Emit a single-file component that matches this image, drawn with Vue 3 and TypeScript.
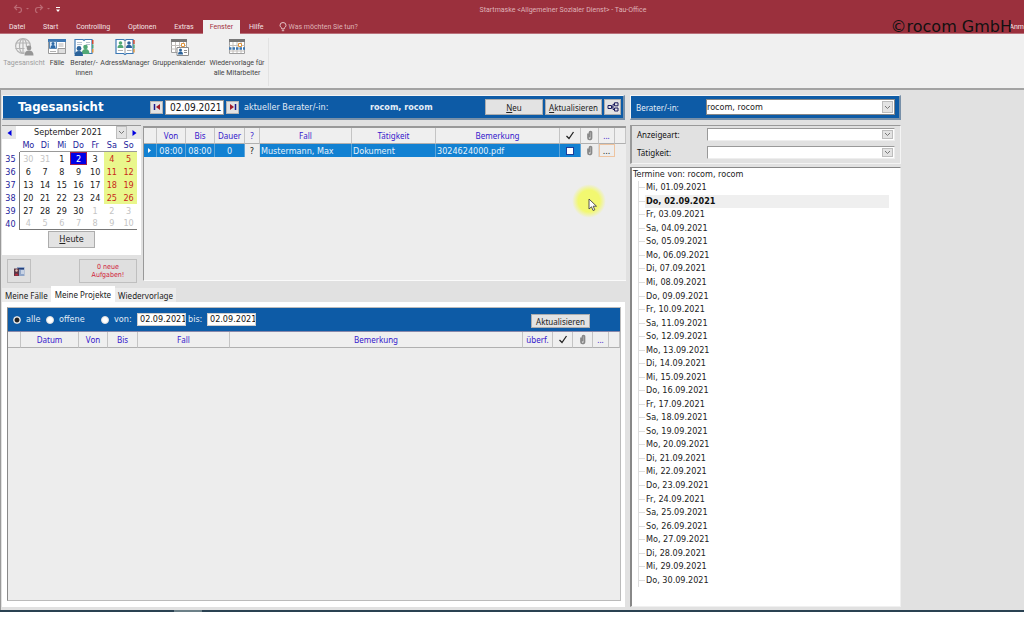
<script setup lang="ts">
import { ref } from 'vue'

interface MenuTab { label: string; active?: boolean }
interface Day { n: number; off?: boolean; today?: boolean; weekend?: boolean }
interface Week { kw: number; days: Day[] }

const menuTabs: MenuTab[] = [
  { label: 'Datei' },
  { label: 'Start' },
  { label: 'Controlling' },
  { label: 'Optionen' },
  { label: 'Extras' },
  { label: 'Fenster', active: true },
  { label: 'Hilfe' },
]

const weekdayNames = ['Mo', 'Di', 'Mi', 'Do', 'Fr', 'Sa', 'So']

function buildWeeks(): Week[] {
  const weeks: Week[] = []
  for (let w = 0; w < 6; w++) {
    const days: Day[] = []
    for (let d = 0; d < 7; d++) {
      const date = new Date(2021, 7, 30 + w * 7 + d)
      const off = date.getMonth() !== 8
      days.push({
        n: date.getDate(),
        off,
        today: !off && date.getDate() === 2,
        weekend: !off && d > 4,
      })
    }
    weeks.push({ kw: 35 + w, days })
  }
  return weeks
}
const weeks = buildWeeks()

const shortDays = ['So', 'Mo', 'Di', 'Mi', 'Do', 'Fr', 'Sa']
const termine = Array.from({ length: 30 }, (_, i) => {
  const date = new Date(2021, 8, i + 1)
  return `${shortDays[date.getDay()]}, ${String(i + 1).padStart(2, '0')}.09.2021`
})

const month = ref('September 2021')
const day = ref('02.09.2021')
const from = ref('02.09.2021')
const to = ref('02.09.2021')
const range = ref('alle')
const berater = ref('rocom, rocom')
const done = ref(false)
</script>

<template>
  <div class="app">
    <header class="top">
      <div class="titlebar">
        <div class="quick">
          <button class="bare" aria-label="Rückgängig">
            <svg width="20" height="10" viewBox="0 0 20 10"><path d="M4 1 L1.500 3.500 L4 6 M1.500 3.500 H6 Q8.500 3.500 8.500 6 Q8.500 8.500 5.500 8.500" fill="none" stroke="#bb6a74" stroke-width="1.200" /><path d="M13 4 h3 l-1.500 1.500z" fill="#bb6a74" /></svg>
          </button>
          <button class="bare" aria-label="Wiederholen">
            <svg width="20" height="10" viewBox="0 0 20 10"><path d="M6 1 L8.500 3.500 L6 6 M8.500 3.500 H4 Q1.500 3.500 1.500 6 Q1.500 8.500 3.500 8.500" fill="none" stroke="#bb6a74" stroke-width="1.200" /><path d="M13 4 h3 l-1.500 1.500z" fill="#bb6a74" /></svg>
          </button>
          <button class="bare narrow" aria-label="Schnellzugriff anpassen">
            <svg width="6" height="8" viewBox="0 0 6 8"><path d="M1 2.500 h4" stroke="#fff" /><path d="M1 4.500 h4 l-2 2.500z" fill="#fff" /></svg>
          </button>
        </div>
        <h1 class="wintitle">Startmaske &lt;Allgemeiner Sozialer Dienst&gt; - Tau-Office</h1>
      </div>
      <nav class="menu">
        <button v-for="t in menuTabs" :key="t.label" class="menutab" :class="{ active: t.active }">{{ t.label }}</button>
        <button class="tell">
          <svg width="8" height="10" viewBox="0 0 8 10"><path d="M2.800 7 V6 Q1 5 1 3.300 A3 2.800 0 0 1 7 3.300 Q7 5 5.200 6 V7 Z M2.800 8.700 h2.400" fill="none" stroke="#ecd2d5" stroke-width=".9" /></svg>
          Was möchten Sie tun?
        </button>
        <button class="login">Anm</button>
      </nav>
      <div class="watermark">©rocom GmbH</div>
    </header>

    <section class="ribbon" aria-label="Fenster">
      <div class="group">
        <button class="tool w1" disabled>
          <svg width="20" height="18" viewBox="0 0 20 18"><g fill="none" stroke="#b4b4b4" stroke-width="1.200"><circle cx="9" cy="8" r="7.400" /><ellipse cx="9" cy="8" rx="3.500" ry="7.400" /><path d="M2 5 H16 M1.500 10.500 H14 M9 .6 V15" /></g><path d="M10.500 9 h8 v9 h-8z" fill="#f0f0f0" /><circle cx="15" cy="10" r="2.400" fill="#969696" /><path d="M10.500 17.500 Q10.500 12.500 15 12.500 Q19.500 12.500 19.500 17.500z" fill="#969696" /></svg>
          <span>Tagesansicht</span>
        </button>
        <button class="tool w2">
          <svg width="18" height="18" viewBox="0 0 18 18"><path d="M.5 1.500 h17 v14 h-17z" fill="#fff" stroke="#9a9a9a" /><path d="M0 1 h18 v3 h-18z" fill="#3c78b4" /><path d="M1.500 3.500 h7 v7 h-7z" fill="#dbe8f4" stroke="#5a88b4" /><circle cx="5" cy="5.500" r="1.500" fill="#2c6aa8" /><path d="M2.500 10 Q2.500 7 5 7 Q7.500 7 7.500 10z" fill="#2c6aa8" /><path d="M10.500 6 h5 M10.500 8 h5 M2 13.500 h6" stroke="#b0b0b0" /><path d="M10 10.500 h7.500 v5 h-7.500z" fill="#dedede" stroke="#9a9a9a" /></svg>
          <span>Fälle</span>
        </button>
        <button class="tool w3">
          <svg width="20" height="18" viewBox="0 0 20 18"><path d="M1 1.500 h8 l1 1 l1-1 h7 v14 h-17z" fill="#fff" stroke="#3c78b4" stroke-width="1.200" /><path d="M3 4.500 h5 M3 6.500 h5 M12 4.500 h4 M12 6.500 h4" stroke="#b8c4d0" /><path d="M18 2 h1.500 v4 h-1.500z" fill="#d14b33" /><path d="M18 6.500 h1.500 v4 h-1.500z" fill="#52a875" /><path d="M18 11 h1.500 v3.500 h-1.500z" fill="#e0953d" /><circle cx="11.500" cy="9" r="2.300" fill="#52a875" /><path d="M7.500 16 Q8 11 11.500 11 Q15.500 11 15.500 16z" fill="#52a875" /><circle cx="5" cy="10.500" r="2.400" fill="#2b6299" /><path d="M.5 18 Q.5 13 5 13 Q9 13 9 18z" fill="#2b6299" /></svg>
          <span>Berater/-<br />innen</span>
        </button>
        <button class="tool w4">
          <svg width="20" height="18" viewBox="0 0 20 18"><path d="M1 1.500 h7.500 l1.500 1 l1.500-1 h6.500 v14 h-6.500 l-1.500 1 l-1.500-1 h-7.500z" fill="#fff" stroke="#3c78b4" stroke-width="1.200" /><path d="M10 2.500 V15" stroke="#999" /><path d="M18.200 2 h1.500 v4 h-1.500z" fill="#d14b33" /><path d="M18.200 6.500 h1.500 v4 h-1.500z" fill="#52a875" /><path d="M18.200 11 h1.500 v3.500 h-1.500z" fill="#e0953d" /><circle cx="5.500" cy="5" r="1.800" fill="#52a875" /><path d="M2.500 10 Q2.500 6.800 5.500 6.800 Q8.500 6.800 8.500 10z" fill="#52a875" /><circle cx="14" cy="5" r="1.800" fill="#2b6299" /><path d="M11 10 Q11 6.800 14 6.800 Q17 6.800 17 10z" fill="#2b6299" /><path d="M3 12.500 h5 M12 12.500 h4.500" stroke="#b0b0b0" /></svg>
          <span>AdressManager</span>
        </button>
        <button class="tool w5">
          <svg width="20" height="18" viewBox="0 0 20 18"><path d="M2.500 1.500 h15 v13 h-15z" fill="#fff" stroke="#a0a0a0" /><path d="M2 1 h16 v3 h-16z" fill="#777" /><path d="M2.500 7.500 h15 M2.500 11 h15 M6.500 4 v10 M10.500 4 v10 M14.500 4 v10" stroke="#c4c0bc" /><path d="M12.500 5.500 h3 v3 h-3z" fill="#fff" stroke="#e0953d" /><path d="M8 9.500 h11.500 v8 h-11.500z" fill="#fff" stroke="#8c8c8c" /><circle cx="11.500" cy="12" r="1.500" fill="#2b6299" /><path d="M9 16.500 Q9 13.500 11.500 13.500 Q14 13.500 14 16.500z" fill="#2b6299" /><path d="M15 12.500 h3 M15 14.500 h3" stroke="#8c8c8c" /></svg>
          <span>Gruppenkalender</span>
        </button>
        <button class="tool w5">
          <svg width="18" height="18" viewBox="0 0 18 18"><path d="M1.500 1.500 h15 v14 h-15z" fill="#fff" stroke="#a0a0a0" /><path d="M1 1 h16 v3 h-16z" fill="#777" /><path d="M1.500 7.500 h15 M1.500 13 h15 M5 4 v11 M9 4 v11 M13 4 v11" stroke="#c4c0bc" /><path d="M10.500 5.500 h3 v3 h-3z" fill="#fff" stroke="#e0953d" /><path d="M1 10.500 h16" stroke="#3c78b4" stroke-width="2.500" stroke-dasharray="2.500 1" /></svg>
          <span>Wiedervorlage für<br />alle Mitarbeiter</span>
        </button>
      </div>
    </section>

    <main class="main">
      <div class="left">
        <section class="bluebar daybar">
          <h2>Tagesansicht</h2>
          <button class="step" aria-label="Vorheriger Tag"><svg width="8" height="8" viewBox="0 0 8 8"><path d="M1.500 1 v6" stroke="#1a1a8c" stroke-width="1.500" /><path d="M7 1 v6 l-4-3z" fill="#a01c2c" /></svg></button>
          <input v-model="day" class="date" aria-label="Datum" />
          <button class="step" aria-label="Nächster Tag"><svg width="8" height="8" viewBox="0 0 8 8"><path d="M6.500 1 v6" stroke="#1a1a8c" stroke-width="1.500" /><path d="M1 1 v6 l4-3z" fill="#a01c2c" /></svg></button>
          <span class="who">aktueller Berater/-in:</span>
          <b class="name">rocom, rocom</b>
          <button class="btn neu"><u>N</u>eu</button>
          <button class="btn akt"><u>A</u>ktualisieren</button>
          <button class="btn tree" aria-label="Struktur"><svg width="12" height="10" viewBox="0 0 12 10"><path d="M1 3.500 h3.500 v3 h-3.500z M7.500 .8 h3.500 v3 h-3.500z M7.500 6 h3.500 v3 h-3.500z M4.500 5 h1.500 M7.500 2.300 h-1.500 v5.200 h1.500" fill="none" stroke="#1b1b5e" /></svg></button>
        </section>

        <div class="dayrow">
          <aside class="side">
            <div class="calendar">
              <div class="calnav">
                <button aria-label="Vorheriger Monat"><svg width="5" height="6" viewBox="0 0 5 6"><path d="M4.500 0 v6 l-4-3z" fill="#0000e0" /></svg></button>
                <div class="combo month">
                  <select v-model="month" aria-label="Monat"><option>September 2021</option></select>
                  <i><svg width="7" height="5" viewBox="0 0 7 5"><path d="M1 1 l2.500 2.500 L6 1" fill="none" stroke="#777" /></svg></i>
                </div>
                <button aria-label="Nächster Monat"><svg width="5" height="6" viewBox="0 0 5 6"><path d="M.5 0 v6 l4-3z" fill="#0000e0" /></svg></button>
              </div>
              <table class="cal">
                <thead><tr><td></td><th v-for="w in weekdayNames" :key="w">{{ w }}</th></tr></thead>
                <tbody>
                  <tr v-for="w in weeks" :key="w.kw">
                    <th>{{ w.kw }}</th>
                    <td v-for="(d, i) in w.days" :key="i" :class="{ off: d.off, today: d.today, weekend: d.weekend }">{{ d.n }}</td>
                  </tr>
                </tbody>
              </table>
              <button class="btn heute"><u>H</u>eute</button>
            </div>
            <div class="sidebtns">
              <button class="flat pic" aria-label="Personenliste"><svg width="12" height="11" viewBox="0 0 12 11"><path d="M4 1 h7.500 v9 h-7.500z" fill="#8fa5c8" /><path d="M5 2 h6 v1.500 h-6z" fill="#24407c" /><path d="M8 5 h3 M8 7 h3" stroke="#fff" /><path d="M1 2.500 h5 v7.500 h-5z" fill="#5a3848" /><circle cx="3.500" cy="4.500" r="1.200" fill="#e8c0b0" /><path d="M1.500 9.500 q2-4 4 0z" fill="#c2283c" /></svg></button>
              <button class="flat tasks">0 neue<br />Aufgaben!</button>
            </div>
          </aside>

          <div class="gridbox">
            <table class="grid">
              <colgroup><col class="k13" /><col class="k29" /><col class="k29" /><col class="k30" /><col class="k15" /><col class="k92" /><col class="k84" /><col /><col class="k21" /><col class="k18" /><col class="k16" /><col class="k11" /></colgroup>
              <thead>
                <tr>
                  <th></th><th>Von</th><th>Bis</th><th>Dauer</th><th>?</th><th>Fall</th><th>Tätigkeit</th><th>Bemerkung</th>
                  <th><svg width="10" height="9" viewBox="0 0 10 9"><path d="M1.500 5 L4 7.500 L8.500 1" fill="none" stroke="#222" stroke-width="1.300" /></svg></th>
                  <th><svg width="8" height="11" viewBox="0 0 8 11"><path d="M2 3.500 V8 Q2 9.500 3.500 9.500 Q5.500 9.500 5.500 8 V2.500 Q5.500 1.500 4.500 1.500 Q3.500 1.500 3.500 2.500 V7.500" fill="none" stroke="#888" stroke-width="1.700" /></svg></th>
                  <th>...</th><th></th>
                </tr>
              </thead>
              <tbody>
                <tr class="sel">
                  <td class="c"><svg width="4" height="5" viewBox="0 0 4 5"><path d="M0 0 v5 l3-2.500z" fill="#fff" /></svg></td>
                  <td class="c">08:00</td><td class="c">08:00</td><td class="c">0</td><td class="c plain">?</td>
                  <td>Mustermann, Max</td><td>Dokument</td><td>3024624000.pdf</td>
                  <td class="c"><input v-model="done" type="checkbox" class="tick" aria-label="Erledigt" /></td>
                  <td class="c plain"><svg width="8" height="11" viewBox="0 0 8 11"><path d="M2 3.500 V8 Q2 9.500 3.500 9.500 Q5.500 9.500 5.500 8 V2.500 Q5.500 1.500 4.500 1.500 Q3.500 1.500 3.500 2.500 V7.500" fill="none" stroke="#888" stroke-width="1.700" /></svg></td>
                  <td class="c more">...</td><td class="rest"></td>
                </tr>
              </tbody>
            </table>
          </div>
        </div>

        <div class="tabs" role="tablist">
          <button role="tab" class="tab">Meine Fälle</button>
          <button role="tab" class="tab on" aria-selected="true">Meine Projekte</button>
          <button role="tab" class="tab">Wiedervorlage</button>
        </div>

        <section class="tabpanel">
          <div class="projects">
            <div class="filterbar">
              <label class="r1"><input v-model="range" type="radio" name="range" value="alle" />alle</label>
              <label class="r2"><input v-model="range" type="radio" name="range" value="offene" />offene</label>
              <label class="r3"><input v-model="range" type="radio" name="range" value="von" />von:</label>
              <input v-model="from" class="date small" aria-label="von" />
              <label class="bis" for="bis">bis:</label>
              <input id="bis" v-model="to" class="date small" />
              <button class="btn upd">Aktualisieren</button>
            </div>
            <table class="grid">
              <colgroup><col class="k13" /><col class="k58" /><col class="k29" /><col class="k30" /><col class="k92" /><col /><col class="k30" /><col class="k20" /><col class="k20" /><col class="k16" /><col class="k11" /></colgroup>
              <thead>
                <tr>
                  <th></th><th>Datum</th><th>Von</th><th>Bis</th><th>Fall</th><th>Bemerkung</th><th>überf.</th>
                  <th><svg width="10" height="9" viewBox="0 0 10 9"><path d="M1.500 5 L4 7.500 L8.500 1" fill="none" stroke="#222" stroke-width="1.300" /></svg></th>
                  <th><svg width="8" height="11" viewBox="0 0 8 11"><path d="M2 3.500 V8 Q2 9.500 3.500 9.500 Q5.500 9.500 5.500 8 V2.500 Q5.500 1.500 4.500 1.500 Q3.500 1.500 3.500 2.500 V7.500" fill="none" stroke="#888" stroke-width="1.700" /></svg></th>
                  <th>...</th><th></th>
                </tr>
              </thead>
            </table>
          </div>
        </section>
      </div>

      <div class="right">
        <section class="bluebar beraterbar">
          <label for="berater">Berater/-in:</label>
          <div class="combo">
            <select id="berater" v-model="berater"><option>rocom, rocom</option></select>
            <i><svg width="7" height="5" viewBox="0 0 7 5"><path d="M1 1 l2.500 2.500 L6 1" fill="none" stroke="#777" /></svg></i>
          </div>
        </section>
        <section class="filters">
          <label for="art">Anzeigeart:</label>
          <div class="combo"><select id="art"></select><i><svg width="7" height="5" viewBox="0 0 7 5"><path d="M1 1 l2.500 2.500 L6 1" fill="none" stroke="#777" /></svg></i></div>
          <label for="taet">Tätigkeit:</label>
          <div class="combo"><select id="taet"></select><i><svg width="7" height="5" viewBox="0 0 7 5"><path d="M1 1 l2.500 2.500 L6 1" fill="none" stroke="#777" /></svg></i></div>
        </section>
        <section class="termine">
          <div class="root">Termine von: rocom, rocom</div>
          <ul>
            <li v-for="(t, i) in termine" :key="t"><span :class="{ cur: i === 1 }">{{ t }}</span></li>
          </ul>
        </section>
      </div>
      <div class="halo"><svg width="10" height="14" viewBox="0 0 10 14"><path d="M1 1 V11 L3.500 8.800 L5 12.500 L6.800 11.800 L5.200 8.200 H8.500z" fill="#fff" stroke="#444" stroke-width=".9" /></svg></div>
    </main>
    <footer class="strip"></footer>
  </div>
</template>

<style>
html, body { background: #fff; }
</style>

<style scoped>
.app {
  --tahoma: "DejaVu Sans Condensed", "Noto Sans", sans-serif;
  --label: 8px/13px "Noto Sans", "Open Sans", sans-serif;
  --segoe: Roboto, "Open Sans", sans-serif;
  --blue: #0d5ba6;
  min-height: 100vh;
  display: flex;
  flex-direction: column;
  font: 9px/13px var(--tahoma);
  color: #222;
}
.app *, .app { box-sizing: border-box; }
button, input, select { font: inherit; color: inherit; margin: 0; padding: 0; border-radius: 0; }
button { display: flex; align-items: center; justify-content: center; border: 0; background: none; white-space: nowrap; }
svg { display: block; flex: none; }
u { text-underline-offset: 1px; }

.top { position: relative; background: #9b303d; color: #f4e4e6; font: 7px/14px var(--segoe); }
.titlebar { height: 20px; display: flex; align-items: center; justify-content: center; position: relative; padding-left: 102px; }
.quick { position: absolute; left: 12px; top: 4px; display: flex; align-items: center; }
.bare { width: 21px; height: 10px; }
.bare.narrow { width: 8px; }
.wintitle { margin: 0; font: 7px/14px var(--segoe); color: #dfb3b8; }
.menu { display: flex; height: 14px; border-bottom: 1px solid #b9707a; }
.menutab { height: 14px; padding: 0 9px; }
.menutab.active { padding: 0 7px; background: #f0f0f0; color: #a3303f; }
.tell { gap: 2px; margin-left: 6px; color: #dfb3b8; }
.login { margin-left: auto; height: 14px; }
.watermark { position: absolute; right: 12px; bottom: -3px; font: 16px/20px "DejaVu Sans", sans-serif; color: #111; }

.ribbon { height: 56px; padding: 4px 0 2px 2px; background: #f0f0f0; border-bottom: 2px solid #a3a3a3; font: 7px/10px var(--segoe); color: #444; }
.group { display: inline-flex; align-items: flex-start; height: 48px; padding-right: 2px; border-right: 1px solid #e2e2e2; }
.tool { flex-direction: column; gap: 2px; }
.tool:disabled { color: #9d9d9d; }
.w1 { width: 44px; } .w2 { width: 22px; } .w3 { width: 32px; } .w4 { width: 50px; } .w5 { width: 58px; }

.main { position: relative; flex: 1; display: flex; gap: 4px; padding: 5px 123px 3px 1px; background: #e1e1e1; border-left: 1px solid #999; }
.left { flex: 1; min-width: 0; display: flex; flex-direction: column; }
.right { width: 271px; display: flex; flex-direction: column; }

.bluebar { display: flex; align-items: center; height: 25px; background: var(--blue); color: #e4edf6; border: 1px solid #f4f4f4; border-right: 2px solid #7890a8; border-bottom: 2px solid #7890a8; }
.daybar { padding-left: 15px; margin-right: 1px; }
.daybar h2 { width: 132px; margin: 0; font: bold 13px/20px var(--tahoma); color: #fff; }
.step { width: 13px; height: 13px; background: #e3e3e3; border: 1px solid #b5b5b5; }
.date { width: 59px; height: 15px; margin: 0 2px; padding-left: 4px; border: 1px solid #999; background: #fff; color: #111; font: 10px/13px var(--tahoma); }
.who { width: 126px; margin-left: 5px; }
.name { flex: 1; }
.btn { height: 16px; background: #e3e3e3; border: 1px solid #adadad; color: #222; font: var(--label); }
.neu { width: 58px; }
.akt { width: 57px; margin-left: 2px; }
.tree { width: 17px; margin: 0 2px 0 2px; }

.dayrow { display: flex; gap: 2px; height: 158px; margin-top: 5px; }
.side { width: 139px; display: flex; flex-direction: column; justify-content: space-between; }
.calendar { background: #fff; height: 130px; border-top: 1px solid #999; display: flex; flex-direction: column; align-items: center; }
.calnav { display: flex; width: 100%; height: 13px; }
.calnav > button { width: 14px; background: #e6e6e6; }
.combo { position: relative; display: flex; flex: 1; background: #fff; color: #222; font: 9px/13px var(--tahoma); }
.combo select { flex: 1; min-width: 0; appearance: none; border: 0; background: none; outline: 0; }
.combo i { position: absolute; top: 1px; right: 1px; bottom: 1px; width: 11px; display: flex; align-items: center; justify-content: center; background: #e3e3e3; border: 1px solid #bdbdbd; pointer-events: none; }
.combo.month i { top: 0; right: 0; bottom: 0; }
.month select { padding-left: 18px; }
.cal { width: 100%; table-layout: fixed; border-collapse: separate; border-spacing: 0; padding-right: 4px; text-align: center; }
.cal th, .cal td { padding: 0; height: 13px; line-height: 12px; font-weight: normal; }
.cal thead td { width: 18px; }
.cal th { color: #1c1c9c; }
.cal thead th { border-bottom: 1px solid #999; }
.cal tbody th { border-right: 1px solid #777; }
.cal tbody tr:last-child td { border-bottom: 1px solid #777; }
.cal td.off { color: #c4c4c4; }
.cal td.weekend { background: #e9f78c; color: #c82818; }
.cal td.today { background: #0000e6; color: #fff; outline: 1px solid #a02050; outline-offset: -1px; }
.heute { width: 47px; height: 17px; margin-top: 1px; font: 9px/13px var(--tahoma); }
.sidebtns { display: flex; justify-content: space-between; padding: 0 4px 0 5px; }
.flat { height: 24px; background: #dfdfdf; border: 1px solid #bfbfbf; }
.pic { width: 24px; }
.tasks { width: 58px; color: #d01838; font: 7px/8px var(--tahoma); }

.gridbox { flex: 1; min-width: 0; margin: 1px 0 2px; background: #ededed; border-top: 2px solid #999; border-left: 1px solid #999; border-bottom: 1px solid #fafafa; }
.grid { width: 100%; table-layout: fixed; border-collapse: separate; border-spacing: 0; }
.grid th { height: 16px; padding: 0; font: var(--label); color: #3418cc; border-right: 1px solid #c4c4c4; border-bottom: 1px solid #b0b0b0; background: #efefef; }
.grid th svg, .grid td svg { margin: 0 auto; }
.grid td { height: 13px; padding: 0 1px; line-height: 12px; white-space: nowrap; border-right: 1px solid #5da4d8; }
.sel td { background: #1281d2; color: #e6f1fa; }
.sel .plain, .sel .more { background: #ededed; color: #222; border-color: #d8d8d8; }
.sel .more { outline: 1px solid #eec4a0; outline-offset: -1px; }
.sel .rest { background: none; border: 0; }
.c { text-align: center; }
.tick { appearance: none; display: block; width: 8px; height: 8px; margin: 0 auto; background: #fff; border: 1px solid #1c3c9c; }
.k11 { width: 11px; } .k13 { width: 13px; } .k15 { width: 15px; } .k16 { width: 16px; } .k18 { width: 18px; } .k20 { width: 20px; } .k21 { width: 21px; } .k29 { width: 29px; } .k30 { width: 30px; } .k58 { width: 58px; } .k84 { width: 84px; } .k92 { width: 92px; }

.tabs { display: flex; align-items: flex-end; height: 16px; margin-top: 3px; font: var(--label); }
.tab { height: 14px; padding: 0 3px; background: #ececec; }
.tab.on { height: 16px; padding: 0 4px; background: #fff; }
.tabpanel { flex: 1; display: flex; flex-direction: column; background: #fff; padding: 5px 4px 6px 5px; margin-right: 1px; }
.projects { flex: 1; background: #ededed; border: 1px solid #bbb; border-left-color: #888; }
.filterbar { display: flex; align-items: center; height: 24px; background: var(--blue); color: #e4edf6; border-bottom: 1px solid #88a; }
.filterbar label { display: flex; align-items: center; gap: 5px; }
.filterbar input[type="radio"] { appearance: none; width: 8px; height: 8px; border-radius: 50%; background: #fff; border: 1px solid #ddd; }
.filterbar input[type="radio"]:checked { background: radial-gradient(circle, #222 2px, #fff 3px); }
.r1 { width: 33px; margin-left: 5px; } .r2 { width: 55px; } .r3 { width: 34px; }
.bis { width: 17px; }
.date.small { width: 49px; height: 13px; font-size: 9px; padding-left: 2px; border-color: #ccc; }
.upd { width: 59px; height: 14px; margin: 3px 30px 0 auto; }

.beraterbar { padding: 0 4px 0 5px; font: var(--label); }
.beraterbar label { width: 70px; }
.beraterbar .combo { height: 16px; border: 1px solid #888; }
.filters { display: grid; grid-template-columns: 70px 1fr; gap: 5px 0; align-items: center; margin-top: 5px; padding: 2px 5px 4px 5px; border: 1px solid #f4f4f4; border-top-color: #999; border-left: 2px solid #999; color: #111; font: var(--label); }
.filters .combo { height: 13px; border: 1px solid #999; border-right-color: #eee; border-bottom-color: #eee; }
.termine { flex: 1; display: flex; flex-direction: column; margin-top: 3px; padding-bottom: 19px; background: #fff; border: 1px solid #f0f0f0; border-top-color: #888; border-left: 2px solid #888; }
.root { padding-left: 1px; }
.termine ul { flex: 1; display: grid; grid-auto-rows: 1fr; margin: 0 11px 0 6px; padding: 0; list-style: none; }
.termine li { display: flex; align-items: center; border-left: 1px solid #ddd; }
.termine li::before { content: ""; width: 6px; border-top: 1px solid #ddd; }
.termine li span { flex: 1; padding-left: 1px; }
.cur { font-weight: bold; background: #efefef; color: #111; }

.halo { position: absolute; left: 571px; top: 94px; width: 34px; height: 34px; border-radius: 50%; background: radial-gradient(circle, #f2f870 45%, transparent 70%); padding: 14px 0 0 16px; pointer-events: none; }
.strip { height: 10px; background: linear-gradient(90deg, transparent 174px, #6c8088 174px, #6c8088 202px, transparent 202px) 0 0 / 100% 2px no-repeat, linear-gradient(#2a4252 2px, #fff 2px); }
</style>
